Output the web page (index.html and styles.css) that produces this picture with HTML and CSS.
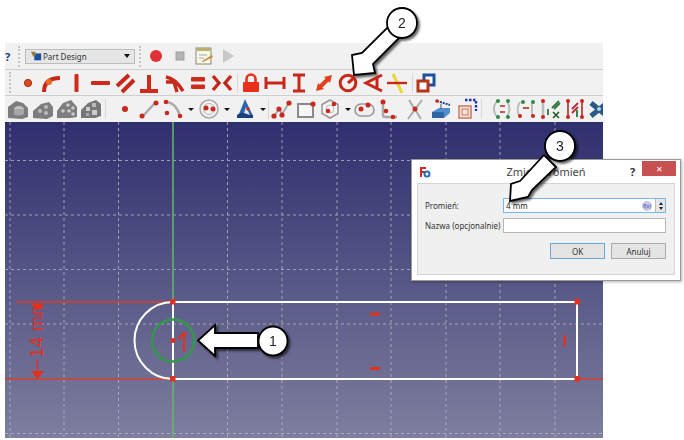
FILE: index.html
```html
<!DOCTYPE html>
<html lang="en">
<head>
    <meta charset="UTF-8">
    <meta name="viewport" content="width=device-width, initial-scale=1.0">
    <title>Zmień promień</title>
    <link rel="stylesheet" href="styles.css">
</head>
<body>
    <div class="app">
        <!-- workbench row -->
        <div class="toolbar bar-top">
            <span class="help">?</span>
            <span class="grip"></span>
            <div class="combo">
                <svg width="12" height="12" viewBox="0 0 14 12"><rect x="5" y="3" width="8" height="8" fill="#1c4f9c"/><path d="M1 1l5 0 1 4-3 2z" fill="#8a7a3a"/></svg>
                <span class="combo-text">Part Design</span>
                <span class="combo-arrow"></span>
            </div>
            <span class="grip grip-b"></span>
            <span class="slot"><svg width="22" height="22" viewBox="0 0 22 22"><circle cx="11" cy="11" r="6" fill="#e2303a"/></svg></span>
            <span class="slot"><svg width="22" height="22" viewBox="0 0 22 22"><rect x="7" y="7" width="8" height="8" fill="#b4b4b4" stroke="#a0a0a0"/></svg></span>
            <span class="slot"><svg width="22" height="22" viewBox="0 0 22 22"><rect x="3" y="3" width="15" height="16" fill="#f6f6ea" stroke="#8a8a70"/><rect x="4" y="3" width="13" height="3" fill="#b9b06a"/><path d="M6 10h8M6 13h5" stroke="#aaa"/><path d="M9 16l10-6 1 2-10 5z" fill="#c9913a"/></svg></span>
            <span class="slot"><svg width="22" height="22" viewBox="0 0 22 22"><path d="M6 4l11 7-11 7z" fill="#c6c9c6"/></svg></span>
        </div>

        <!-- sketcher constraints -->
        <div class="toolbar bar-mid">
            <span class="grip grip-c"></span>
            <span class="slot-m"><svg width="22" height="22" viewBox="0 0 22 22"><circle cx="12" cy="11" r="3.6" fill="#dd4a1e" stroke="#a82a12"/></svg></span>
            <span class="slot-m"><svg width="22" height="22" viewBox="0 0 22 22"><path d="M3 20c0-8 4-14 16-14" fill="none" stroke="#c8281a" stroke-width="4"/><circle cx="8" cy="10" r="3" fill="#ee6a22"/></svg></span>
            <span class="slot-m"><svg width="22" height="22" viewBox="0 0 22 22"><rect x="9.500" y="2" width="4" height="18" rx="1" fill="#d02a1a"/></svg></span>
            <span class="slot-m"><svg width="22" height="22" viewBox="0 0 22 22"><rect x="2" y="9" width="19" height="4" rx="1" fill="#d02a1a"/></svg></span>
            <span class="slot-m"><svg width="22" height="22" viewBox="0 0 22 22"><path d="M3 14L15 3M8 20L20 8" stroke="#c8281a" stroke-width="4"/></svg></span>
            <span class="slot-m"><svg width="22" height="22" viewBox="0 0 22 22"><path d="M2 19h18M11 3v16" stroke="#d02a1a" stroke-width="4" fill="none"/></svg></span>
            <span class="slot-m"><svg width="22" height="22" viewBox="0 0 22 22"><path d="M3 5c7 1 12 6 17 14M3 10l8 0 3 10" stroke="#c8281a" stroke-width="3.400" fill="none"/></svg></span>
            <span class="slot-m"><svg width="22" height="22" viewBox="0 0 22 22"><rect x="4" y="5" width="14" height="4.500" rx="1" fill="#d02a1a"/><rect x="4" y="12.500" width="14" height="4.500" rx="1" fill="#d02a1a"/></svg></span>
            <span class="slot-m"><svg width="22" height="22" viewBox="0 0 22 22"><path d="M2 4l6 7-6 7M20 4l-6 7 6 7" stroke="#c8281a" stroke-width="3.400" fill="none"/><path d="M8 11h-1M14 11h1" stroke="#444" stroke-width="2"/></svg></span>
            <span class="divider divider-a"></span>
            <span class="slot-m"><svg width="22" height="22" viewBox="0 0 22 22"><path d="M6.500 10V7a4.500 4.500 0 0 1 9 0v3" fill="none" stroke="#e8301a" stroke-width="2.600"/><rect x="3" y="10" width="16" height="10" rx="1" fill="#e8301a"/></svg></span>
            <span class="slot-m"><svg width="22" height="22" viewBox="0 0 22 22"><path d="M2 5v12M20 5v12" stroke="#c8281a" stroke-width="3"/><rect x="3" y="9.500" width="16" height="3" fill="#c8281a"/></svg></span>
            <span class="slot-m"><svg width="22" height="22" viewBox="0 0 22 22"><path d="M5 3h12M5 19h12" stroke="#c8281a" stroke-width="3"/><rect x="9.500" y="4" width="3" height="14" fill="#c8281a"/></svg></span>
            <span class="slot-m"><svg width="22" height="22" viewBox="0 0 22 22"><path d="M7 15L15 7" stroke="#e2401c" stroke-width="4"/><path d="M3 19l2-8 6 6zM19 3l-8 2 6 6z" fill="#e2401c"/></svg></span>
            <span class="slot-m"><svg width="22" height="22" viewBox="0 0 22 22"><circle cx="11" cy="11" r="7.800" fill="none" stroke="#c8281a" stroke-width="3"/><path d="M11 11L18 5" stroke="#c8281a" stroke-width="3"/></svg></span>
            <span class="slot-m"><svg width="22" height="22" viewBox="0 0 22 22"><path d="M20 3L4 11l16 8" fill="none" stroke="#c8281a" stroke-width="3"/><path d="M15 5.500v11" stroke="#c8281a" stroke-width="3"/></svg></span>
            <span class="slot-m"><svg width="22" height="22" viewBox="0 0 22 22"><path d="M7 2l9 19" stroke="#e8d83a" stroke-width="3"/><path d="M1 11h20" stroke="#c8281a" stroke-width="2.400"/></svg></span>
            <span class="divider divider-b"></span>
            <span class="slot"><svg width="22" height="22" viewBox="0 0 22 22"><rect x="9" y="3" width="10" height="10" fill="#fff" stroke="#1c4f9c" stroke-width="3"/><rect x="3" y="9" width="10" height="10" fill="#fff" stroke="#b8341a" stroke-width="3"/></svg></span>
        </div>

        <!-- sketcher geometry -->
        <div class="toolbar bar-low">
            <span class="slot-m"><svg width="22" height="22" viewBox="0 0 22 22"><path d="M1 20V9l8-6 7 2 5 5v9l-6 2z" fill="#7d7d7d"/><ellipse cx="12" cy="11" rx="5" ry="3" fill="#c4c4c4"/><path d="M7 11v5c2 2 7 2 10 0v-5" fill="#a8a8a8"/></svg></span>
            <span class="slot-m"><svg width="22" height="22" viewBox="0 0 22 22"><path d="M1 20v-7l8-7 8-2 4 5v9l-6 3z" fill="#7d7d7d"/><circle cx="8" cy="13" r="2" fill="#bbb"/><circle cx="14" cy="9" r="2" fill="#bbb"/><circle cx="14" cy="15" r="2" fill="#bbb"/></svg></span>
            <span class="slot-m"><svg width="22" height="22" viewBox="0 0 22 22"><path d="M1 20v-7l6-8 8-3 6 7v10l-6 1z" fill="#7d7d7d"/><circle cx="7" cy="13" r="1.800" fill="#ccc"/><circle cx="12" cy="7" r="1.800" fill="#ccc"/><circle cx="13" cy="13" r="1.800" fill="#ccc"/><circle cx="17" cy="10" r="1.800" fill="#ccc"/><circle cx="17" cy="16" r="1.800" fill="#ccc"/></svg></span>
            <span class="slot-m"><svg width="22" height="22" viewBox="0 0 22 22"><path d="M1 20v-8l7-7 8-3 5 4v12l-6 2z" fill="#777"/><rect x="6" y="9" width="4" height="4" fill="#ccc"/><rect x="12" y="5" width="4" height="4" fill="#bbb"/><rect x="12" y="12" width="5" height="5" fill="#ccc"/><rect x="6" y="15" width="3" height="3" fill="#aaa"/></svg></span>
            <span class="divider divider-c"></span>
            <span class="slot"><svg width="22" height="22" viewBox="0 0 22 22"><circle class="pt" cx="11" cy="11" r="3"/></svg></span>
            <span class="slot"><svg width="22" height="22" viewBox="0 0 22 22"><path d="M5 18L17 5" stroke="#aaa" stroke-width="2.500"/><circle class="pt" cx="4" cy="18" r="2.500"/><circle class="pt" cx="18" cy="5" r="2.500"/></svg></span>
            <span class="slot"><svg width="22" height="22" viewBox="0 0 22 22"><path d="M5 4c7 1 11 7 13 14" fill="none" stroke="#aaa" stroke-width="2.500"/><circle class="pt" cx="4" cy="4" r="2.300"/><circle class="pt" cx="5" cy="15" r="2.300"/><circle class="pt" cx="18" cy="18" r="2.300"/></svg></span>
            <span class="drop"></span>
            <span class="slot"><svg width="22" height="22" viewBox="0 0 22 22"><circle cx="11" cy="11" r="9" fill="#f2f2f2" stroke="#aaa" stroke-width="1.500"/><circle cx="11" cy="11" r="5.500" fill="none" stroke="#bbb"/><circle class="pt" cx="8" cy="10" r="2.500"/><circle class="pt" cx="15" cy="11" r="2.500"/></svg></span>
            <span class="drop"></span>
            <span class="slot"><svg width="22" height="22" viewBox="0 0 22 22"><path d="M11 1l7 15H5z" fill="#2a66b0"/><path d="M3 17c3-3 13-3 16 0v3H3z" fill="#1c3f80"/><path d="M12 9l4 8-6-2z" fill="#e4e8f0"/><circle class="pt" cx="14" cy="11" r="1.800"/></svg></span>
            <span class="drop drop-b"></span>
            <span class="divider divider-d"></span>
            <span class="slot"><svg width="22" height="22" viewBox="0 0 22 22"><path d="M3 18l5-7 3 5 7-11" fill="none" stroke="#aaa" stroke-width="2"/><circle class="pt" cx="3" cy="18" r="2.600"/><circle class="pt" cx="8" cy="11" r="2.600"/><circle class="pt" cx="11" cy="17" r="2.600"/><circle class="pt" cx="18" cy="5" r="2.600"/></svg></span>
            <span class="slot"><svg width="22" height="22" viewBox="0 0 22 22"><rect x="3" y="6" width="15" height="13" fill="#f6f6f6" stroke="#8a8a8a" stroke-width="2"/><circle class="pt" cx="18" cy="6" r="2.600"/></svg></span>
            <span class="slot"><svg width="22" height="22" viewBox="0 0 22 22"><path d="M11 2l8 4.500v9L11 20l-8-4.500v-9z" fill="#f4f4f4" stroke="#999" stroke-width="1.600"/><circle cx="11" cy="11" r="4" fill="none" stroke="#bbb"/><circle class="pt" cx="15" cy="6" r="2.300"/><circle class="pt" cx="9" cy="13" r="2.300"/></svg></span>
            <span class="drop drop-c"></span>
            <span class="slot"><svg width="22" height="22" viewBox="0 0 22 22"><rect x="2" y="6" width="19" height="12" rx="6" fill="#eee" stroke="#999" stroke-width="1.600"/><circle class="pt" cx="8" cy="11" r="2.500"/><circle class="pt" cx="15" cy="7" r="2.500"/></svg></span>
            <span class="slot-w"><svg width="22" height="22" viewBox="0 0 22 22"><path d="M5 5v12a2 2 0 0 0 2 2h12" fill="none" stroke="#aaa" stroke-width="2.500"/><circle class="pt" cx="5" cy="4" r="2.500"/><circle class="pt" cx="8" cy="13" r="2.300"/><circle class="pt" cx="15" cy="19" r="2.300"/></svg></span>
            <span class="slot-w"><svg width="22" height="22" viewBox="0 0 22 22"><path d="M5 2l12 19M18 2L4 21" stroke="#aaa" stroke-width="2"/><circle class="pt" cx="11" cy="11" r="2.500"/></svg></span>
            <span class="slot-w"><svg width="22" height="22" viewBox="0 0 22 22"><path d="M2 14l7-4h11v5l-6 5H2z" fill="#4f8fcf"/><path d="M2 14h12v6H2z" fill="#2f66a8"/><path d="M7 3l13 4" stroke="#1c3f80" stroke-width="2" stroke-dasharray="2 1"/><circle class="pt" cx="7" cy="3" r="1.800"/><path d="M11 6v5" stroke="#555"/></svg></span>
            <span class="slot-w"><svg width="22" height="22" viewBox="0 0 22 22"><path d="M9 2h11v11" fill="none" stroke="#2030b0" stroke-width="2.400" stroke-dasharray="2.500 1.500"/><rect x="3" y="8" width="12" height="12" fill="#f4e4dc" stroke="#c87860" stroke-width="1.500"/><rect x="6" y="11" width="6" height="6" fill="none" stroke="#c87860"/></svg></span>
            <span class="divider divider-e"></span>
            <span class="slot-m"><svg width="22" height="22" viewBox="0 0 22 22"><path d="M6 3c-4 5-4 11 0 16M16 3c3 5 3 11 0 16" fill="none" stroke="#bbb" stroke-width="2"/><circle class="dot-g" cx="7" cy="3" r="2"/><circle class="dot-g" cx="17" cy="3" r="2"/><circle class="dot-g" cx="7" cy="19" r="2"/><circle class="dot-g" cx="17" cy="19" r="2"/><path d="M9 8h5M9 14h5" stroke="#b03020" stroke-width="1.600"/></svg></span>
            <span class="slot-m"><svg width="22" height="22" viewBox="0 0 22 22"><path d="M5 4c-3 5-3 11 0 15M17 4v15" fill="none" stroke="#bbb" stroke-width="2"/><circle class="dot-g" cx="8" cy="4" r="2"/><circle class="dot-g" cx="18" cy="4" r="2"/><circle class="pt" cx="5" cy="18" r="2"/><circle class="pt" cx="18" cy="18" r="2"/><path d="M8 10h6" stroke="#b03020" stroke-width="1.600"/></svg></span>
            <span class="slot-m"><svg width="22" height="22" viewBox="0 0 22 22"><path d="M3 3v16" stroke="#bbb" stroke-width="2.500"/><circle class="pt" cx="3" cy="3" r="2"/><circle class="pt" cx="3" cy="19" r="2"/><path d="M8 11v6M12 10l7-7M14 11l6-6" stroke="#2f7a38" stroke-width="1.800"/><path d="M13 14l6 6M19 14l-6 6" stroke="#1f5a28" stroke-width="1.600"/></svg></span>
            <span class="slot-m"><svg width="22" height="22" viewBox="0 0 22 22"><path d="M4 3v16M18 3v16" stroke="#c0504a" stroke-width="2"/><circle class="pt" cx="4" cy="3" r="2"/><circle class="pt" cx="18" cy="3" r="2"/><circle class="pt" cx="4" cy="19" r="2"/><circle class="pt" cx="18" cy="19" r="2"/><path d="M8 11l6-6M8 15l6-6" stroke="#c0283a" stroke-width="1.800"/><path d="M13 12v7" stroke="#1f7a38" stroke-width="1.800"/></svg></span>
            <span class="slot-m"><svg width="22" height="22" viewBox="0 0 22 22"><path d="M3 5l16 13M3 18L19 5" stroke="#2a5a88" stroke-width="5"/><circle cx="11" cy="11" r="2" fill="#b8d0e8"/></svg></span>
        </div>

        <!-- 3D view with the sketch -->
        <div class="view">
            <svg class="sketch" width="598" height="316" viewBox="5 122 598 316">
                <g class="grid">
                    <path d="M10 122V438M64 122V438M118.500 122V438M227.500 122V438M282 122V438M337 122V438M391 122V438M446 122V438M500 122V438M555 122V438"/>
                    <path d="M5 160.500H603M5 215H603M5 269.500H603M5 324H603M5 433.500H603"/>
                </g>
                <path d="M173 122V438" stroke="#62b868" stroke-width="1.500"/>
                <path d="M16 302H173M5 379H173M577 379H603" stroke="#d8402a" stroke-width="1.500"/>
                <path d="M173 302H577V379H173M173 302A38.500 38.500 0 0 0 173 379V302" fill="none" stroke="#fff" stroke-width="2"/>
                <circle cx="173" cy="340.500" r="21" fill="none" stroke="#2f9a48" stroke-width="2.500"/>
                <g fill="#e0301e">
                    <rect x="170" y="299" width="5.500" height="5.500"/>
                    <rect x="170" y="376" width="5.500" height="5.500"/>
                    <rect x="574.500" y="299" width="5.500" height="5.500"/>
                    <rect x="574.500" y="376" width="5.500" height="5.500"/>
                    <circle cx="173" cy="340.500" r="2.500"/>
                    <rect x="370" y="312.500" width="10" height="3"/>
                    <rect x="370" y="367" width="10" height="3"/>
                    <rect x="563.500" y="335" width="2.500" height="11"/>
                    <path d="M31 304H44L37.500 311ZM31 371H44L37.500 379Z"/>
                    <rect x="36.800" y="360" width="1.400" height="12"/>
                </g>
                <path d="M178 339l5-5 4-1M184 334V352" fill="none" stroke="#e0301e" stroke-width="2"/>
                <text class="dim" transform="translate(43 358) rotate(-90)">14 mm</text>
            </svg>
        </div>
    </div>

    <div class="dialog">
        <div class="dialog-title">
            <svg width="12" height="12" viewBox="0 0 12 12"><path d="M1 1h6v2H3v2h3v2H3v4H1z" fill="#d0281e"/><circle cx="8" cy="8" r="2.500" fill="none" stroke="#2a6ab8" stroke-width="2"/></svg>
            <span class="dialog-name">Zmień promień</span>
            <span class="dialog-help">?</span>
            <span class="dialog-close">✕</span>
        </div>
        <div class="dialog-body">
            <div class="form-row">
                <span class="form-label">Promień:</span>
                <div class="field field-active">
                    <span class="field-text">4 mm</span>
                    <span class="fx">f(x)</span>
                    <span class="spin"></span>
                </div>
            </div>
            <div class="form-row">
                <span class="form-label">Nazwa (opcjonalnie)</span>
                <div class="field"></div>
            </div>
            <div class="dialog-buttons">
                <button class="btn btn-default">OK</button>
                <button class="btn">Anuluj</button>
            </div>
        </div>
    </div>

    <!-- numbered callouts drawn over the screenshot -->
    <svg class="callouts" width="684" height="440" viewBox="0 0 684 440">
        <g class="callout">
            <path d="M198 340.500L215 325V333H258V348H215V356Z"/>
            <circle cx="273" cy="341" r="14.500"/>
            <text x="273" y="346">1</text>
        </g>
        <g class="callout">
            <path d="M354 75L352 55L362 53L388 27L399 38L373 64L375 73Z"/>
            <circle cx="402" cy="23" r="15"/>
            <text x="402" y="28">2</text>
        </g>
        <g class="callout">
            <path d="M510 201L511 184L520 181L544 155L556 167L532 190L528 197Z"/>
            <circle cx="560" cy="146" r="15"/>
            <text x="560" y="151">3</text>
        </g>
    </svg>
</body>
</html>
```

FILE: styles.css
```css
body {
    margin: 0;
    width: 684px;
    height: 440px;
    position: relative;
    overflow: hidden;
    background-color: #fff;
    font-family: "Noto Sans", sans-serif;
}
.app {
    margin: 43px 0 0 5px;
    width: 598px;
    overflow: hidden;
}
.toolbar {
    display: flex;
    align-items: center;
    background-color: #f1f1f1;
}
.bar-top {
    height: 26px;
    border-bottom: 1px solid #cfcfcf;
}
.bar-mid {
    height: 25px;
    padding-left: 4px;
    border-bottom: 1px solid #cfcfcf;
}
.bar-low {
    height: 26px;
    padding-left: 1px;
}
.help {
    width: 12px;
    font-size: 11px;
    font-weight: bold;
    color: #1a3a7a;
}
.grip {
    width: 3px;
    height: 21px;
    margin: 0 4px 0 1px;
    border-left: 2px dotted #c4c4c4;
    box-sizing: border-box;
}
.grip-b {
    margin: 0 2px 0 4px;
}
.grip-c {
    margin: 0 3px 0 0;
}
.combo {
    display: flex;
    align-items: center;
    gap: 1px;
    width: 110px;
    height: 15px;
    padding: 0 4px;
    box-sizing: border-box;
    background-color: #e6e6e6;
    border: 1px solid #bcbcbc;
}
.combo-text {
    flex: 1;
    font-size: 8px;
    color: #333;
}
.combo-arrow {
    border: 3px solid transparent;
    border-top: 4px solid #111;
    border-bottom: 0;
}
.slot, .slot-m, .slot-w {
    display: flex;
    flex: none;
    justify-content: center;
    width: 24px;
}
.slot-m {
    width: 24.4px;
}
.slot-w {
    width: 26px;
}
.drop {
    flex: none;
    width: 0;
    margin: 0 3px 0 3px;
    border: 3px solid transparent;
    border-top: 3px solid #111;
    border-bottom: 0;
    height: 0;
}
.drop-b {
    margin-right: 0;
}
.drop-c {
    margin-right: 1px;
}
.divider {
    flex: none;
    width: 1px;
    height: 20px;
    margin: 0 1px;
    background-color: #d8d8d8;
}
.divider-a {
    margin: 0 1px 0 2px;
}
.divider-b {
    margin: 0 1px 0 3px;
}
.divider-c {
    margin: 0 7px 0 1px;
}
.divider-d {
    margin: 0 1px 0 2px;
}
.divider-e {
    margin: 0 8px 0 1px;
}
.pt {
    fill: #c8281e;
}
.dot-g {
    fill: #2f8a48;
}
.view {
    height: 316px;
    background: linear-gradient(#2f2f6e, #7e7e9e);
}
.sketch {
    display: block;
}
.grid {
    fill: none;
    stroke: #b4b4c8;
    stroke-width: 1;
    stroke-dasharray: 3 3;
    opacity: 0.8;
}
.dim {
    font-family: "Liberation Sans", sans-serif;
    font-size: 19px;
    fill: #e0301e;
}
.dialog {
    position: absolute;
    left: 411px;
    top: 159px;
    width: 270px;
    height: 122px;
    box-sizing: border-box;
    padding: 0 5px 5px;
    background-color: #fff;
    border: 1px solid #9a9a9a;
    box-shadow: 1px 1px 3px rgba(0, 0, 0, 0.3);
    display: flex;
    flex-direction: column;
}
.dialog-title {
    display: flex;
    align-items: center;
    height: 23px;
    flex: none;
    position: relative;
    padding-left: 2px;
}
.dialog-name {
    position: absolute;
    left: 59px;
    width: 140px;
    text-align: center;
    font-size: 11px;
    color: #444;
}
.dialog-help {
    position: absolute;
    left: 213px;
    font-size: 11px;
    font-weight: bold;
    color: #333;
}
.dialog-close {
    position: absolute;
    left: 225px;
    top: 1px;
    width: 34px;
    height: 15px;
    background-color: #c75050;
    color: #fff;
    font-size: 8px;
    line-height: 15px;
    text-align: center;
}
.dialog-body {
    flex: 1;
    display: flex;
    flex-direction: column;
    gap: 5px;
    padding: 14px 8px 0 7px;
    background-color: #f0f0f0;
    border: 1px solid #d4d4d4;
    font-size: 8px;
    color: #333;
}
.form-row {
    display: flex;
    align-items: center;
}
.form-label {
    width: 78px;
    flex: none;
    white-space: nowrap;
}
.field {
    display: flex;
    align-items: center;
    flex: 1;
    height: 15px;
    box-sizing: border-box;
    padding: 0 2px;
    background-color: #fff;
    border: 1px solid #b8b8b8;
}
.field-active {
    border-color: #7eb4ea;
}
.field-text {
    flex: 1;
    color: #222;
}
.fx {
    width: 10px;
    height: 10px;
    border-radius: 50%;
    background-color: #c8c8ec;
    color: #3a3a9a;
    font-size: 5px;
    line-height: 10px;
    text-align: center;
}
.spin {
    display: flex;
    flex-direction: column;
    align-items: center;
    justify-content: center;
    gap: 2px;
    width: 9px;
    height: 13px;
    margin: 0 -2px 0 3px;
    background-color: #e6e6e6;
    border-left: 1px solid #bbb;
}
.spin::before, .spin::after {
    content: "";
    border: 2px solid transparent;
}
.spin::before {
    border-top: 0;
    border-bottom: 3px solid #222;
}
.spin::after {
    border-bottom: 0;
    border-top: 3px solid #222;
}
.dialog-buttons {
    display: flex;
    justify-content: flex-end;
    gap: 6px;
    margin-top: 5px;
}
.btn {
    width: 55px;
    height: 16px;
    padding: 0;
    font-family: inherit;
    font-size: 8px;
    color: #333;
    background-color: #e4e4e4;
    border: 1px solid #acacac;
}
.btn-default {
    border-color: #6aa8dc;
}
.callouts {
    position: absolute;
    left: 0;
    top: 0;
}
.callout {
    fill: #fff;
    stroke: #000;
    stroke-width: 1.8;
    filter: drop-shadow(2px 2px 1px rgba(0, 0, 0, 0.6));
}
.callout text {
    font-family: "Liberation Sans", sans-serif;
    font-size: 14px;
    text-anchor: middle;
    fill: #222;
    stroke: none;
}
```
